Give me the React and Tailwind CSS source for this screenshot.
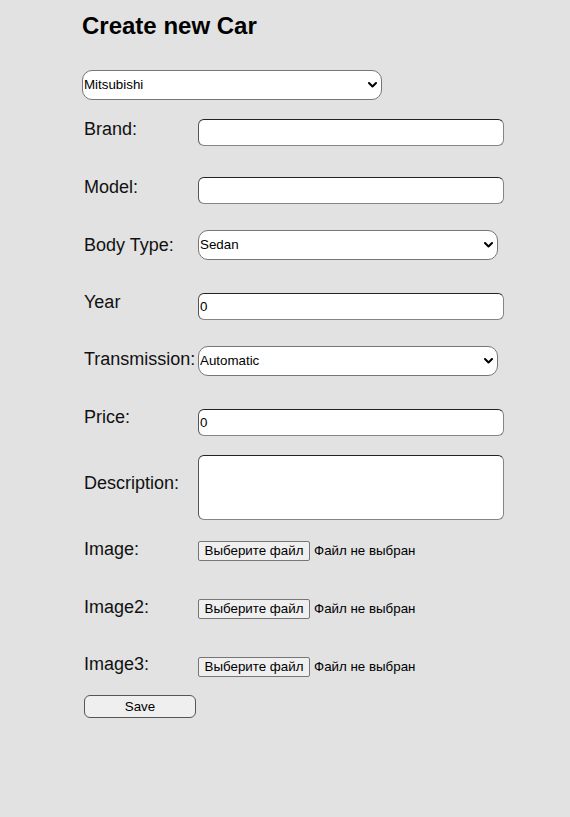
function Chevron() {
    return (
        <svg className="absolute right-[5px] top-1/2 -translate-y-1/2 pointer-events-none" width="9" height="6" viewBox="0 0 9 6" fill="none">
            <path d="M1 1l3.5 3.5L8 1" stroke="#000" strokeWidth="2" strokeLinecap="round" strokeLinejoin="round" />
        </svg>
    )
}

function SelectBox({ value, options, width }) {
    return (
        <div className={`relative h-[30px] ${width}`}>
            <select
                defaultValue={value}
                className="appearance-none w-full h-full bg-white border border-[#767676] rounded-[10px] pl-[1px] pr-5 text-[13.333px] text-black outline-none"
            >
                {options.map((o) => (
                    <option key={o} value={o}>{o}</option>
                ))}
            </select>
            <Chevron />
        </div>
    )
}

function TextInput({ value }) {
    return (
        <input
            type="text"
            defaultValue={value}
            className="w-[306px] h-[27px] bg-white border border-[#858585] border-t-[#222] border-l-[#555] rounded-[6px] px-[1px] text-[13.333px] text-black outline-none"
        />
    )
}

function FilePick() {
    return (
        <div className="flex items-center gap-[4px] text-[13.333px] text-black">
            <button className="h-[20px] w-[112px] bg-[#efefef] border border-[#767676] rounded-[2px] text-[13.333px] leading-none whitespace-nowrap">
                Выберите файл
            </button>
            <span>Файл не выбран</span>
        </div>
    )
}

function Row({ label, labelOffset, rowGap, children }) {
    return (
        <div className={`flex items-start ${rowGap}`}>
            <label className={`w-[114px] text-[18px] leading-[21px] text-[#111] ${labelOffset}`}>{label}</label>
            {children}
        </div>
    )
}

export default function App() {
    return (
        <div className="min-h-screen bg-[#e2e2e2] font-['Liberation_Sans',Arial,sans-serif] text-black">
            <div className="pl-[82px] pt-[12px]">
                <h2 className="text-[24px] font-bold leading-[28px]">Create new Car</h2>
                <div className="mt-[30px]">
                    <SelectBox value="Mitsubishi" options={["Mitsubishi", "Toyota", "BMW", "Audi"]} width="w-[300px]" />
                </div>
                <div className="pl-[2px]">
                    <Row label="Brand:" labelOffset="mt-0" rowGap="mt-[19px]">
                        <TextInput value="" />
                    </Row>
                    <Row label="Model:" labelOffset="mt-0" rowGap="mt-[31px]">
                        <TextInput value="" />
                    </Row>
                    <Row label="Body Type:" labelOffset="mt-[5px]" rowGap="mt-[26px]">
                        <SelectBox value="Sedan" options={["Sedan", "Hatchback", "SUV", "Coupe"]} width="w-[300px]" />
                    </Row>
                    <Row label="Year" labelOffset="-mt-[1px]" rowGap="mt-[33px]">
                        <TextInput value="0" />
                    </Row>
                    <Row label="Transmission:" labelOffset="mt-[3px]" rowGap="mt-[26px]">
                        <SelectBox value="Automatic" options={["Automatic", "Manual"]} width="w-[300px]" />
                    </Row>
                    <Row label="Price:" labelOffset="-mt-[2px]" rowGap="mt-[33px]">
                        <TextInput value="0" />
                    </Row>
                    <Row label="Description:" labelOffset="mt-[18px]" rowGap="mt-[19px]">
                        <textarea className="w-[306px] h-[65px] bg-white border border-[#858585] border-t-[#222] border-l-[#555] rounded-[6px] px-[1px] text-[13.333px] outline-none resize-none block" />
                    </Row>
                    <Row label="Image:" labelOffset="-mt-[2px]" rowGap="mt-[21px]">
                        <FilePick />
                    </Row>
                    <Row label="Image2:" labelOffset="-mt-[2px]" rowGap="mt-[38px]">
                        <FilePick />
                    </Row>
                    <Row label="Image3:" labelOffset="-mt-[3px]" rowGap="mt-[38px]">
                        <FilePick />
                    </Row>
                    <button className="mt-[18px] block w-[112px] h-[23px] bg-[#efefef] border border-[#555] rounded-[6px] text-[13.333px] leading-none">
                        Save
                    </button>
                </div>
            </div>
        </div>
    )
}
